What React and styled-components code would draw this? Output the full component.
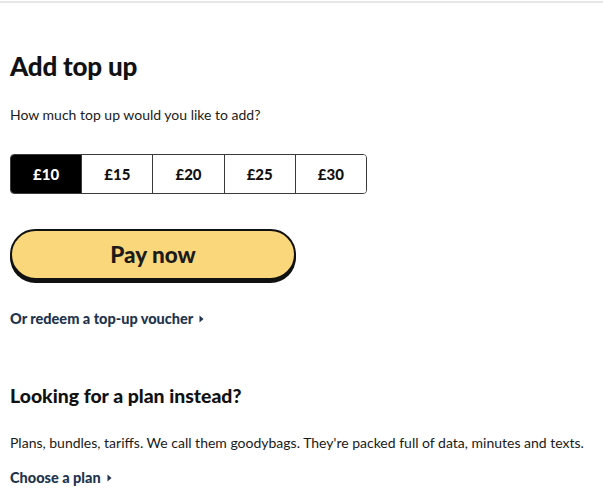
import React, { useState } from "react";
import styled, { createGlobalStyle } from "styled-components";

const GlobalStyle = createGlobalStyle`
  html, body {
    margin: 0;
    padding: 0;
    background: #ffffff;
    font-family: Lato, "Open Sans", sans-serif;
    color: #111111;
  }
`;

const amounts = [10, 15, 20, 25, 30];

const App = () => {
  const [selected, setSelected] = useState(10);

  return (
    <>
      <GlobalStyle />
      <St.Page>
        <St.TopRule />
        <St.Content>
          <St.Title>Add top up</St.Title>
          <St.Question>How much top up would you like to add?</St.Question>
          <St.Amounts>
            {amounts.map((amount) => (
              <St.Amount
                key={amount}
                $active={selected === amount}
                onClick={() => setSelected(amount)}
              >
                £{amount}
              </St.Amount>
            ))}
          </St.Amounts>
          <St.PayButton>Pay now</St.PayButton>
          <St.Link href="#" $gap="30px">
            Or redeem a top-up voucher <Caret />
          </St.Link>
          <St.SubTitle>Looking for a plan instead?</St.SubTitle>
          <St.Text>
            Plans, bundles, tariffs. We call them goodybags. They're packed
            full of data, minutes and texts.
          </St.Text>
          <St.Link href="#" $gap="17px">
            Choose a plan <Caret />
          </St.Link>
        </St.Content>
      </St.Page>
    </>
  );
};

const Caret = () => (
  <svg width="5" height="8" viewBox="0 0 5 8" aria-hidden="true">
    <path d="M0.5 0.5 L4.5 4 L0.5 7.5 Z" fill="currentColor" />
  </svg>
);

export default App;

const St = {
  Page: styled.div`
    width: 603px;
    min-height: 500px;
    background: #ffffff;
  `,
  TopRule: styled.div`
    height: 2px;
    margin-top: 1px;
    background: #e6e6e6;
  `,
  Content: styled.div`
    display: flex;
    flex-direction: column;
    align-items: flex-start;
    padding: 0 10px;
  `,
  Title: styled.h1`
    margin: 47px 0 0;
    font-size: 26px;
    line-height: 32px;
    font-weight: 900;
    letter-spacing: -0.2px;
    color: #111111;
  `,
  Question: styled.p`
    margin: 24px 0 0;
    font-size: 14px;
    line-height: 18px;
    color: #1a1a1a;
  `,
  Amounts: styled.div`
    display: flex;
    margin-top: 30px;
    width: 357px;
    height: 40px;
    border: 1px solid #3a3a3a;
    border-radius: 4px;
    overflow: hidden;
    box-sizing: border-box;
  `,
  Amount: styled.button`
    flex: 1;
    display: flex;
    align-items: center;
    justify-content: center;
    border: none;
    border-left: ${({ $active }) => ($active ? "none" : "1px solid #3a3a3a")};
    &:first-child {
      border-left: none;
    }
    background: ${({ $active }) => ($active ? "#000000" : "#ffffff")};
    color: ${({ $active }) => ($active ? "#ffffff" : "#111111")};
    font-family: Lato, sans-serif;
    font-size: 15px;
    font-weight: 900;
    padding: 0;
    cursor: pointer;
  `,
  PayButton: styled.button`
    margin-top: 35px;
    width: 286px;
    height: 51px;
    border: 2px solid #111111;
    border-radius: 26px;
    background: #fad77a;
    box-shadow: 0 3px 0 #111111;
    font-family: Lato, sans-serif;
    font-size: 22.5px;
    font-weight: 900;
    color: #1b1b1b;
    cursor: pointer;
    box-sizing: border-box;
  `,
  Link: styled.a`
    display: inline-flex;
    align-items: center;
    gap: 6px;
    margin-top: ${({ $gap }) => $gap};
    font-size: 14.5px;
    line-height: 18px;
    font-weight: 900;
    color: #22344d;
    text-decoration: none;
  `,
  SubTitle: styled.h2`
    margin: 55px 0 0;
    font-size: 19.4px;
    line-height: 26px;
    font-weight: 900;
    color: #111111;
  `,
  Text: styled.p`
    margin: 25px 0 0;
    font-size: 14px;
    line-height: 18px;
    color: #1a1a1a;
  `,
};
